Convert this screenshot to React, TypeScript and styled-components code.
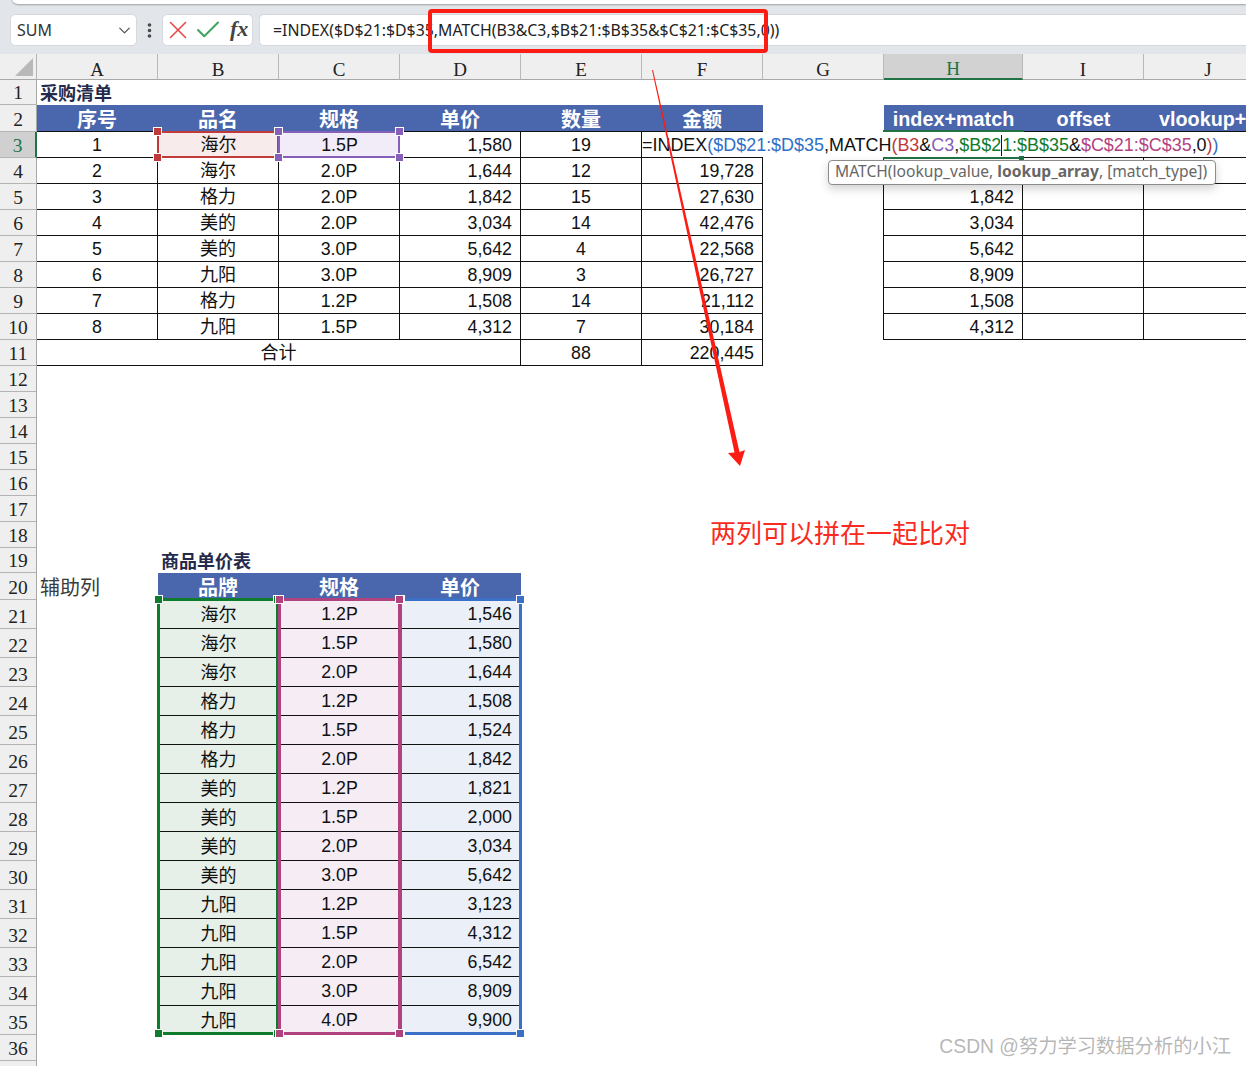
import React from 'react';
import styled, { createGlobalStyle } from 'styled-components';
import { X, Check, ChevronDown, EllipsisVertical } from 'lucide-react';

const Global = createGlobalStyle`
  html, body { margin: 0; padding: 0; background: #fff; }
  * { box-sizing: border-box; }
`;

const SANS = `"Liberation Sans", "Noto Sans CJK SC", sans-serif`;
const UI = `"Noto Sans", "Noto Sans CJK SC", sans-serif`;
const GREEN = '#217346';

const Page = styled.div`
  position: relative;
  width: 1246px;
  height: 1066px;
  overflow: hidden;
  background: #fff;
  font-family: ${SANS};
`;

const Toolbar = styled.div`
  height: 54px;
  background: #e2e5e9;
  padding: 14px 0 0 10px;
  display: flex;
  align-items: flex-start;
  position: relative;
`;
const TopStrip = styled.div`
  position: absolute;
  left: 12px;
  right: 0;
  top: -4px;
  height: 8px;
  background: #fff;
  border-radius: 0 0 0 6px;
  box-shadow: 0 1px 2px rgba(0, 0, 0, 0.3);
`;
const NameBox = styled.div`
  width: 127px;
  height: 32px;
  background: #fff;
  border: 1px solid #d6d8dc;
  border-radius: 5px;
  display: flex;
  align-items: center;
  justify-content: space-between;
  padding: 0 2px 0 6px;
  font: 16px ${UI};
  color: #333;
  svg { color: #555; }
`;
const Grip = styled.div`
  width: 25px;
  height: 32px;
  display: flex;
  align-items: center;
  justify-content: center;
  color: #444;
`;
const FnBox = styled.div`
  width: 91px;
  height: 32px;
  background: #fff;
  border: 1px solid #d6d8dc;
  border-radius: 5px;
  display: flex;
  align-items: center;
`;
const FxMark = styled.span`
  font: italic bold 22px "Liberation Serif", serif;
  color: #444;
  line-height: 1;
  margin-left: 7px;
  padding-bottom: 3px;
`;
const FormulaInput = styled.div`
  margin-left: 6px;
  flex: 1;
  height: 32px;
  background: #fff;
  border: 1px solid #d6d8dc;
  border-right: none;
  border-radius: 5px 0 0 5px;
  padding-left: 13px;
  display: flex;
  align-items: center;
  font: 15.85px ${UI};
  color: #222;
  white-space: nowrap;
`;

const Sheet = styled.div`
  display: grid;
  grid-template-columns: 37px repeat(7, 121px) 139px 121px 129px;
  grid-template-rows: 26px 25px 27px repeat(16, 26px) 25px 27px repeat(15, 29px) 26px 30px;
  font-size: 17.8px;
  color: #111;
`;

const Corner = styled.div`
  background: #efefef;
  border-right: 1px solid #b4b4b4;
  border-bottom: 1px solid #a8a8a8;
  position: relative;
  &::after {
    content: '';
    position: absolute;
    right: 3px;
    bottom: 3px;
    border-style: solid;
    border-width: 0 0 18px 18px;
    border-color: transparent transparent #b9b9b9 transparent;
  }
`;
const ColHead = styled.div<{ $active?: boolean }>`
  background: ${(p) => (p.$active ? '#d2d2d2' : '#efefef')};
  border-right: 1px solid #b9b9b9;
  border-bottom: ${(p) => (p.$active ? `2px solid ${GREEN}` : '1px solid #a8a8a8')};
  color: ${(p) => (p.$active ? GREEN : '#222')};
  font: 19px "Liberation Serif", serif;
  display: flex;
  align-items: flex-end;
  justify-content: center;
  line-height: 19px;
`;
const RowLabel = styled.div<{ $active?: boolean }>`
  background: ${(p) => (p.$active ? '#d0d0d0' : '#efefef')};
  border-right: ${(p) => (p.$active ? `2px solid ${GREEN}` : '1px solid #a8a8a8')};
  border-bottom: 1px solid #b4b4b4;
  color: ${(p) => (p.$active ? GREEN : '#222')};
  font: 19.5px "Liberation Serif", serif;
  display: flex;
  align-items: flex-end;
  justify-content: center;
  line-height: 22px;
`;
const Blank = styled.div<{ $edge?: boolean }>`
  background: #fff;
  border-right: ${(p) => (p.$edge ? '1px solid #111' : 'none')};
`;
const Title = styled.div`
  font-weight: 700;
  font-size: 18px;
  color: #232a4c;
  white-space: nowrap;
  padding: 3px 0 0 3px;
  display: flex;
  align-items: center;
  line-height: 22px;
`;
const Helper = styled.div`
  font-size: 20px;
  color: #3a3a3a;
  white-space: nowrap;
  padding: 0 0 0 3px;
  display: flex;
  align-items: center;
`;
const Head = styled.div<{ $han?: boolean }>`
  background: #4a66ac;
  color: #fff;
  font-weight: 700;
  font-size: ${(p) => (p.$han ? '20px' : '19.8px')};
  display: flex;
  align-items: center;
  justify-content: center;
  border-bottom: 1px solid #111;
  white-space: nowrap;
  padding: ${(p) => (p.$han ? '0 1px 0 0' : '2px 0 0')};
`;
const Clip = styled(Head)`
  justify-content: flex-start;
  padding-left: 15px;
  overflow: hidden;
`;
const Data = styled.div<{ $right?: boolean; $span?: number; $han?: boolean }>`
  background: #fff;
  border-right: 1px solid #111;
  border-bottom: 1px solid #111;
  display: flex;
  align-items: center;
  justify-content: ${(p) => (p.$right ? 'flex-end' : 'center')};
  padding: ${(p) => (p.$han ? '0 0 3px 0' : `2px ${p.$right ? '8px' : '0'} 0 0`)};
  font-size: ${(p) => (p.$han ? '18px' : 'inherit')};
  grid-column: span ${(p) => p.$span ?? 1};
  white-space: nowrap;
`;
const Tinted = styled.div<{ $fill: string; $right?: boolean; $han?: boolean }>`
  background: ${(p) => p.$fill};
  border-bottom: 1px solid #111;
  display: flex;
  align-items: center;
  justify-content: ${(p) => (p.$right ? 'flex-end' : 'center')};
  padding: ${(p) => (p.$han ? '0 0 2px 0' : `0 ${p.$right ? '9px' : '0'} 0 0`)};
  font-size: ${(p) => (p.$han ? '18px' : 'inherit')};
`;

const Frame = styled.div<{ $x: number; $y: number; $w: number; $h: number; $c: string; $t?: number }>`
  position: absolute;
  left: ${(p) => p.$x}px;
  top: ${(p) => p.$y}px;
  width: ${(p) => p.$w}px;
  height: ${(p) => p.$h}px;
  border: ${(p) => p.$t ?? 2}px solid ${(p) => p.$c};
`;
const Handle = styled.i<{ $c: string; $r?: boolean; $b?: boolean; $o: number }>`
  position: absolute;
  width: 7px;
  height: 7px;
  background: ${(p) => p.$c};
  outline: 1px solid #fff;
  ${(p) => (p.$r ? `right: ${p.$o}px;` : `left: ${p.$o}px;`)}
  ${(p) => (p.$b ? `bottom: ${p.$o}px;` : `top: ${p.$o}px;`)}
`;

const EditLine = styled.div`
  position: absolute;
  left: 642px;
  top: 132px;
  width: 604px;
  height: 25px;
  background: #fff;
  display: flex;
  align-items: center;
  padding-top: 2px;
  font-size: 17.96px;
  white-space: nowrap;
  color: #111;
`;
const Tok = styled.span<{ $c: string }>`
  color: ${(p) => p.$c};
`;
const Caret = styled.span`
  display: inline-block;
  width: 0;
  height: 21px;
  border-left: 1px solid #111;
`;
const SelBar = styled.div<{ $y: number; $w: number }>`
  position: absolute;
  left: 883px;
  top: ${(p) => p.$y}px;
  width: ${(p) => p.$w}px;
  height: 2px;
  background: ${GREEN};
`;
const SelKnob = styled.div`
  position: absolute;
  left: 1019px;
  top: 156px;
  width: 5px;
  height: 4px;
  background: ${GREEN};
`;
const Tip = styled.div`
  position: absolute;
  left: 828px;
  top: 160px;
  width: 388px;
  height: 25px;
  background: #fff;
  border: 1px solid #8c8c8c;
  border-radius: 4px;
  box-shadow: 0 4px 10px rgba(0, 0, 0, 0.18);
  padding: 0 0 3px 6px;
  display: flex;
  align-items: center;
  font: 15.62px ${UI};
  color: #666;
  white-space: nowrap;
  b { font-weight: 700; }
`;
const RedBox = styled.div`
  position: absolute;
  left: 428px;
  top: 9px;
  width: 340px;
  height: 44px;
  border: 4px solid #fb1c14;
  border-radius: 4px;
`;
const Arrow = styled.svg`
  position: absolute;
  left: 0;
  top: 0;
  pointer-events: none;
`;
const Note = styled.div`
  position: absolute;
  left: 710px;
  top: 515px;
  font-size: 26px;
  line-height: 38px;
  color: #fb2a20;
  white-space: nowrap;
`;
const Watermark = styled.div`
  position: absolute;
  right: 15px;
  top: 1034px;
  font-size: 19.3px;
  line-height: 26px;
  color: rgba(110, 110, 110, 0.5);
  white-space: nowrap;
`;
const CellFill = styled.div<{ $x: number; $fill: string; $han?: boolean }>`
  position: absolute;
  left: ${(p) => p.$x}px;
  top: 132px;
  width: 121px;
  height: 25px;
  background: ${(p) => p.$fill};
  display: flex;
  align-items: center;
  justify-content: center;
  font-size: ${(p) => (p.$han ? '18px' : '17.8px')};
  padding: ${(p) => (p.$han ? '0 0 3px 0' : '2px 0 0')};
  color: #111;
`;

const COLS = ['A', 'B', 'C', 'D', 'E', 'F', 'G', 'H', 'I', 'J'];
const ROW_H: number[] = Array.from({ length: 37 }, (_, i) => i + 1);

const purchase = [
  ['1', '海尔', '1.5P', '1,580', '19', ''],
  ['2', '海尔', '2.0P', '1,644', '12', '19,728'],
  ['3', '格力', '2.0P', '1,842', '15', '27,630'],
  ['4', '美的', '2.0P', '3,034', '14', '42,476'],
  ['5', '美的', '3.0P', '5,642', '4', '22,568'],
  ['6', '九阳', '3.0P', '8,909', '3', '26,727'],
  ['7', '格力', '1.2P', '1,508', '14', '21,112'],
  ['8', '九阳', '1.5P', '4,312', '7', '30,184'],
];
const lookup = ['', '', '1,842', '3,034', '5,642', '8,909', '1,508', '4,312'];
const prices = [
  ['海尔', '1.2P', '1,546'],
  ['海尔', '1.5P', '1,580'],
  ['海尔', '2.0P', '1,644'],
  ['格力', '1.2P', '1,508'],
  ['格力', '1.5P', '1,524'],
  ['格力', '2.0P', '1,842'],
  ['美的', '1.2P', '1,821'],
  ['美的', '1.5P', '2,000'],
  ['美的', '2.0P', '3,034'],
  ['美的', '3.0P', '5,642'],
  ['九阳', '1.2P', '3,123'],
  ['九阳', '1.5P', '4,312'],
  ['九阳', '2.0P', '6,542'],
  ['九阳', '3.0P', '8,909'],
  ['九阳', '4.0P', '9,900'],
];

function blanks(n: number, key: string) {
  return Array.from({ length: n }, (_, i) => <Blank key={key + i} />);
}

function rowCells(r: number): React.ReactNode {
  if (r === 1) return [<Title key="t">采购清单</Title>, ...blanks(9, 'b')];
  if (r === 2) {
    return [
      ...['序号', '品名', '规格', '单价', '数量', '金额'].map((t) => <Head key={t} $han>{t}</Head>),
      <Blank key="g" />,
      <Head key="h">index+match</Head>,
      <Head key="i">offset</Head>,
      <Clip key="j">vlookup+</Clip>,
    ];
  }
  if (r >= 3 && r <= 10) {
    const d = purchase[r - 3];
    return [
      <Data key="a">{d[0]}</Data>,
      <Data key="b" $han>{d[1]}</Data>,
      <Data key="c">{d[2]}</Data>,
      <Data key="d" $right>{d[3]}</Data>,
      <Data key="e">{d[4]}</Data>,
      <Data key="f" $right>{d[5]}</Data>,
      <Blank key="g" $edge />,
      <Data key="h" $right>{lookup[r - 3]}</Data>,
      <Data key="i" />,
      <Data key="j" />,
    ];
  }
  if (r === 11) {
    return [
      <Data key="a" $span={4} $han>合计</Data>,
      <Data key="e">88</Data>,
      <Data key="f" $right>220,445</Data>,
      ...blanks(4, 'b'),
    ];
  }
  if (r === 19) return [<Blank key="a" />, <Title key="t">商品单价表</Title>, ...blanks(8, 'b')];
  if (r === 20) {
    return [
      <Helper key="a">辅助列</Helper>,
      <Head key="b" $han>品牌</Head>,
      <Head key="c" $han>规格</Head>,
      <Head key="d" $han>单价</Head>,
      ...blanks(6, 'b'),
    ];
  }
  if (r >= 21 && r <= 35) {
    const d = prices[r - 21];
    return [
      <Blank key="a" />,
      <Tinted key="b" $fill="#e6efe8" $han>{d[0]}</Tinted>,
      <Tinted key="c" $fill="#f6ecf3">{d[1]}</Tinted>,
      <Tinted key="d" $fill="#eaeff8" $right>{d[2]}</Tinted>,
      ...blanks(6, 'b'),
    ];
  }
  return blanks(10, 'b');
}

const RangeFrame: React.FC<{ x: number; y: number; w: number; h: number; c: string; t?: number }> = ({ x, y, w, h, c, t = 2 }) => {
  const o = -3 - t + (t > 2 ? 1 : 0);
  return (
    <Frame $x={x} $y={y} $w={w} $h={h} $c={c} $t={t}>
      <Handle $c={c} $o={o} />
      <Handle $c={c} $o={o} $r />
      <Handle $c={c} $o={o} $b />
      <Handle $c={c} $o={o} $r $b />
    </Frame>
  );
};

export default function App() {
  return (
    <Page>
      <Global />
      <Toolbar>
        <TopStrip />
        <NameBox>
          SUM
          <ChevronDown size={19} strokeWidth={1.6} />
        </NameBox>
        <Grip>
          <EllipsisVertical size={19} strokeWidth={2.6} />
        </Grip>
        <FnBox>
          <X size={30} color="#e8484a" strokeWidth={1.3} />
          <Check size={30} color="#3ea35f" strokeWidth={1.6} />
          <FxMark>fx</FxMark>
        </FnBox>
        <FormulaInput>=INDEX($D$21:$D$35,MATCH(B3&amp;C3,$B$21:$B$35&amp;$C$21:$C$35,0))</FormulaInput>
      </Toolbar>

      <Sheet>
        <Corner />
        {COLS.map((c) => (
          <ColHead key={c} $active={c === 'H'}>{c}</ColHead>
        ))}
        {ROW_H.map((r) => (
          <React.Fragment key={r}>
            <RowLabel $active={r === 3}>{r < 37 ? r : ''}</RowLabel>
            {rowCells(r)}
          </React.Fragment>
        ))}
      </Sheet>

      <CellFill $x={158} $fill="#f8ebeb" $han>海尔</CellFill>
      <CellFill $x={279} $fill="#f1ecf8">1.5P</CellFill>
      <RangeFrame x={157} y={131} w={122} h={27} c="#c0393b" />
      <RangeFrame x={278} y={131} w={122} h={27} c="#8660b8" />

      <RangeFrame x={157} y={598} w={122} h={437} c="#0f7b2c" t={3} />
      <RangeFrame x={399} y={598} w={123} h={437} c="#3a70c6" t={3} />
      <RangeFrame x={278} y={598} w={123} h={437} c="#b0437f" t={3} />

      <EditLine>
        <span>=INDEX</span>
        <Tok $c="#2f6fc6">(</Tok>
        <Tok $c="#2f6fc6">$D$21:$D$35</Tok>
        <span>,MATCH</span>
        <Tok $c="#c0393b">(B3</Tok>
        <span>&amp;</span>
        <Tok $c="#8660b8">C3</Tok>
        <span>,</span>
        <Tok $c="#0f7b2c">$B$2</Tok>
        <Caret />
        <Tok $c="#0f7b2c">1:$B$35</Tok>
        <span>&amp;</span>
        <Tok $c="#b0437f">$C$21:$C$35</Tok>
        <span>,0</span>
        <Tok $c="#c0393b">)</Tok>
        <Tok $c="#2f6fc6">)</Tok>
      </EditLine>
      <SelBar $y={130} $w={141} />
      <SelBar $y={157} $w={137} />
      <SelKnob />
      <Tip>
        <span>MATCH(lookup_value, <b>lookup_array</b>, [match_type])</span>
      </Tip>

      <RedBox />
      <Arrow width="1246" height="1066" viewBox="0 0 1246 1066">
        <polygon
          points="652,70 653,70 739.5,452 745,450 740,466 728,453 734.5,452.5"
          fill="#fb1c14"
        />
      </Arrow>
      <Note>两列可以拼在一起比对</Note>
      <Watermark>CSDN @努力学习数据分析的小江</Watermark>
    </Page>
  );
}
